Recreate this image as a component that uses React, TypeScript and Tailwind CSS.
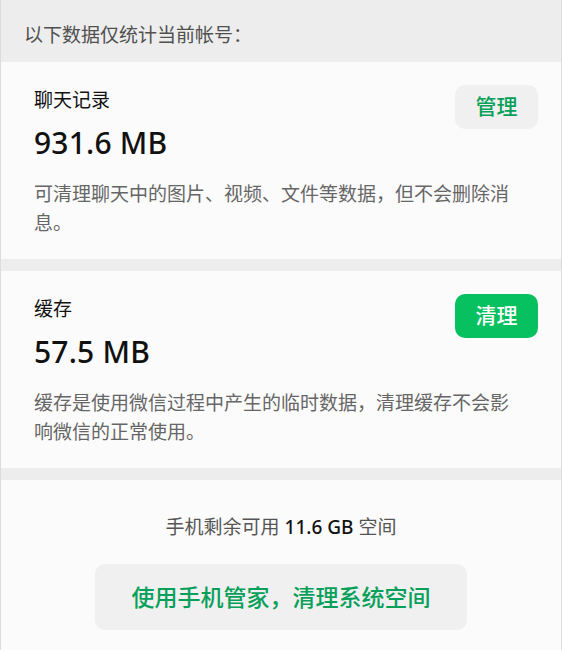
import React, { ReactNode } from 'react';

type CardProps = {
  title: string;
  size: string;
  action: ReactNode;
  children: ReactNode;
};

const font = { fontFamily: '"Noto Sans", "Noto Sans CJK SC", sans-serif' };

const StorageCard = ({ title, size, action, children }: CardProps) => {
  return (
    <div className="bg-[#fbfbfb] px-[33px] pt-[21px] pb-[21px]">
      <div className="flex items-start justify-between">
        <div className="pt-[2px]">
          <p className="text-[19px] leading-[30px] text-[#111]">{title}</p>
          <p className="mt-[10px] text-[30px] leading-[36px] font-medium text-[#111] tracking-[0.2px]">{size}</p>
        </div>
        <div className="mr-[-10px] pt-[2px]">{action}</div>
      </div>
      <p className="mt-[19px] text-[19px] leading-[29px] text-[#666]">{children}</p>
    </div>
  );
};

const App = () => {
  return (
    <div className="w-[562px] h-[650px] overflow-hidden bg-[#ededed] border-x border-[#dcdcdc]" style={font}>
      <div className="h-[62px] flex items-center px-[23px]">
        <p className="text-[19px] text-[#505050] pt-[8px]">以下数据仅统计当前帐号：</p>
      </div>

      <StorageCard
        title="聊天记录"
        size="931.6 MB"
        action={
          <button className="w-[83px] h-[44px] rounded-[10px] bg-[#f0f0f0] text-[21px] font-medium text-[#07a05a]">
            管理
          </button>
        }
      >
        可清理聊天中的图片、视频、文件等数据，但不会删除消
        <br />
        息。
      </StorageCard>

      <div className="h-[12px]" />

      <StorageCard
        title="缓存"
        size="57.5 MB"
        action={
          <button className="w-[83px] h-[44px] rounded-[10px] bg-[#07c160] text-[21px] font-medium text-white">
            清理
          </button>
        }
      >
        缓存是使用微信过程中产生的临时数据，清理缓存不会影
        <br />
        响微信的正常使用。
      </StorageCard>

      <div className="h-[12px]" />

      <div className="bg-[#fbfbfb] h-[200px] flex flex-col items-center pt-[34px]">
        <p className="text-[19px] leading-[26px] text-[#555]">
          手机剩余可用 <span className="font-medium text-[#111]">11.6 GB</span> 空间
        </p>
        <button className="mt-[24px] w-[372px] h-[66px] rounded-[10px] bg-[#f0f0f0] text-[23px] font-medium text-[#07a05a]">
          使用手机管家，清理系统空间
        </button>
      </div>
    </div>
  );
};

export default App;
